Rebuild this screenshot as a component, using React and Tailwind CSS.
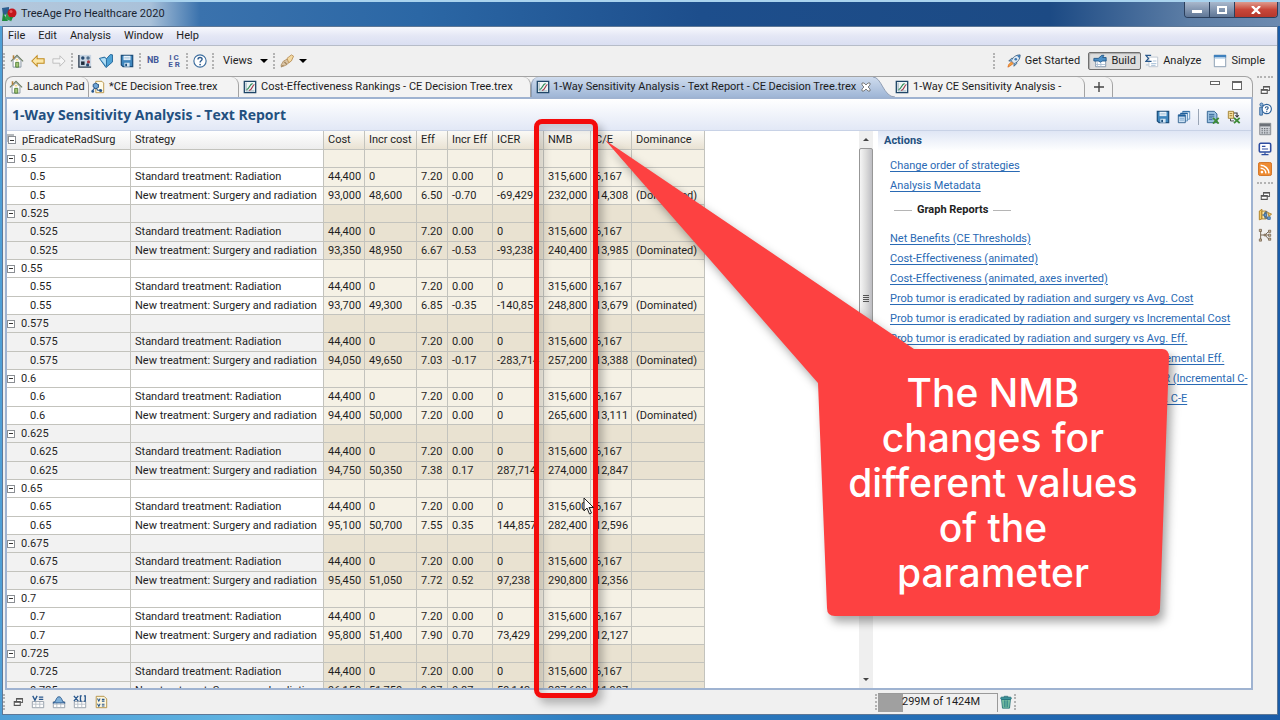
import clsx from 'clsx'

const GROUPS = [
  ['0.5', '93,000', '48,600', '6.50', '-0.70', '-69,429', '232,000', '14,308', '(Dominated)'],
  ['0.525', '93,350', '48,950', '6.67', '-0.53', '-93,238', '240,400', '13,985', '(Dominated)'],
  ['0.55', '93,700', '49,300', '6.85', '-0.35', '-140,857', '248,800', '13,679', '(Dominated)'],
  ['0.575', '94,050', '49,650', '7.03', '-0.17', '-283,714', '257,200', '13,388', '(Dominated)'],
  ['0.6', '94,400', '50,000', '7.20', '0.00', '0', '265,600', '13,111', '(Dominated)'],
  ['0.625', '94,750', '50,350', '7.38', '0.17', '287,714', '274,000', '12,847', ''],
  ['0.65', '95,100', '50,700', '7.55', '0.35', '144,857', '282,400', '12,596', ''],
  ['0.675', '95,450', '51,050', '7.72', '0.52', '97,238', '290,800', '12,356', ''],
  ['0.7', '95,800', '51,400', '7.90', '0.70', '73,429', '299,200', '12,127', ''],
  ['0.725', '96,150', '51,750', '8.07', '0.87', '59,143', '307,600', '11,907', ''],
]
const STANDARD = ['44,400', '0', '7.20', '0.00', '0', '315,600', '6,167', '']
const HEADERS = ['Cost', 'Incr cost', 'Eff', 'Incr Eff', 'ICER', 'NMB', 'C/E', 'Dominance']

const TUMOR = 'Prob tumor is eradicated by radiation and surgery vs '
const GRAPH_LINKS = [
  'Net Benefits (CE Thresholds)',
  'Cost-Effectiveness (animated)',
  'Cost-Effectiveness (animated, axes inverted)',
  TUMOR + 'Avg. Cost',
  TUMOR + 'Incremental Cost',
  TUMOR + 'Avg. Eff.',
  TUMOR + 'Incremental Eff.',
  TUMOR + 'ICER (Incremental C-',
  TUMOR + 'Avg. C-E',
]

/* ---------- icons ---------- */

function Icon({ size = 'size-[14px]', children }) {
  return <svg viewBox="0 0 16 16" className={clsx('shrink-0', size)} fill="none" aria-hidden="true">{children}</svg>
}

const Logo = () => (
  <Icon size="size-4">
    <path d="M1 2l7-1v7l-6 1z" fill="#2b5d8e" />
    <path d="M2 7l5 8H1z" fill="#1e8a3c" />
    <path d="M6 6l4 9-6-2z" fill="#2f9e48" />
    <circle cx="11" cy="7" r="4.500" fill="#c4161c" />
    <circle cx="10" cy="5.500" r="1.500" fill="#e8585c" />
    <path d="M8 11l4 0-2 4.500z" fill="#1e8a3c" />
  </Icon>
)

const House = () => (
  <Icon>
    <path d="M3.500 7.500v7.500h9v-7.500L8 3z" fill="#fff" stroke="#7b8a99" />
    <path d="M1 8.500L8 1.500l7 7" stroke="#6b7c62" strokeWidth="1.200" />
    <path d="M4 1.500v4" stroke="#b5803a" strokeWidth="1.800" />
    <path d="M6.500 9.500h3.500v5.500H6.500z" fill="#a8c878" stroke="#4c7a35" />
    <path d="M6.500 5.500h3v2h-3z" fill="#f6d98b" />
  </Icon>
)

const Arrow = ({ right }) => (
  <Icon>
    {right
      ? <path d="M15 8L9 2v3.500H1v5h8V14z" fill="#f6f6f6" stroke="#b9b9b9" />
      : <path d="M1 8l6-6v3.500h8v5H7V14z" fill="#fbe6a6" stroke="#c08a1e" strokeWidth="1.200" />}
  </Icon>
)

const Grid = () => (
  <Icon>
    <path d="M1 1h14v14H1z" fill="#c9d6e3" />
    <path d="M1 1v14h14" stroke="#2f3f52" strokeWidth="1.500" />
    <circle cx="5.500" cy="4.500" r="2" fill="#26496f" />
    <circle cx="11.500" cy="4.500" r="2" fill="#50708f" />
    <path d="M3.500 8.500h4v4h-4z" fill="#1f2c3c" />
    <circle cx="12" cy="9" r="1.800" fill="#a83a44" />
    <circle cx="11" cy="12.500" r="1.800" fill="#26496f" />
  </Icon>
)

const OpenBook = () => (
  <Icon>
    <path d="M.5 5l6-1.500 2 2L13 .5l2.500.5v8L8 15.500z" fill="#4fa3d6" stroke="#1c5f93" />
    <path d="M1.500 5.500l5-1 2 2V14z" fill="#b5dff5" />
    <path d="M8.500 6v8" stroke="#1c5f93" />
  </Icon>
)

const Floppy = () => (
  <Icon>
    <path d="M1.500 1.500h13v13h-11l-2-2z" fill="#3f86bd" stroke="#1d4f7c" strokeWidth="1.400" />
    <path d="M4 2h8v5H4z" fill="#e9f3fb" />
    <path d="M5 4h6M5 5.500h6" stroke="#a9c4da" strokeWidth=".8" />
    <path d="M5 10h6v4.500H5z" fill="#d3e5f3" />
    <path d="M6 11h2v3H6z" fill="#1d4f7c" />
  </Icon>
)

const Floppies = () => (
  <Icon>
    <path d="M6.500 1.500h8v9h-8z" fill="#e9f3fb" stroke="#5f8fbb" />
    <path d="M4 3.500h8v9H4z" fill="#cfe3f4" stroke="#5f8fbb" />
    <path d="M1.500 5.500h8v9h-8z" fill="#cde1f3" stroke="#2a5c8c" />
    <path d="M1.500 6.500h8" stroke="#1d5f9c" strokeWidth="2" />
    <path d="M4 4h8M6.500 2h8" stroke="#1d5f9c" strokeWidth="1.200" />
    <path d="M3 9.500h5M3 11.500h5" stroke="#7da7cd" />
  </Icon>
)

const HelpRing = () => (
  <Icon>
    <circle cx="8" cy="8" r="7" fill="#fff" stroke="#3c6d9e" strokeWidth="1.300" />
    <path d="M5.700 6.200c0-3 4.700-3 4.700-.2 0 1.800-2.300 1.700-2.300 3.600" stroke="#2c5c90" strokeWidth="1.600" />
    <circle cx="8.100" cy="12" r="1" fill="#2c5c90" />
  </Icon>
)

const Torch = () => (
  <Icon>
    <path d="M1 13l3-5 6-3 2 3-4 4-4 2z" fill="#d8c3a4" stroke="#b39468" />
    <path d="M8 5l5-4 2.500 1.500L13 8l-3 2z" fill="#f3d9a2" stroke="#b98f56" />
    <path d="M5 9l3 3M1 15l3-2" stroke="#9b7b50" strokeWidth="1.200" />
  </Icon>
)

const Rocket = () => (
  <Icon>
    <path d="M5 8c1-4 5-7 10-7 0 5-3 9-7 10z" fill="#dfe9f2" stroke="#41607e" />
    <path d="M11 1.500c1.500 0 3-.5 4-.5 0 1-.3 2.500-.7 4z" fill="#3c78b4" />
    <circle cx="10" cy="6" r="1.500" fill="#3c78b4" />
    <path d="M5 8L2 8l3-3 2 0M8 11v3l3-3v-2" fill="#7fb0d8" stroke="#41607e" />
    <path d="M5 9l2 2-4 3-2 1 1-3z" fill="#f3a33c" stroke="#d9641e" strokeWidth=".8" />
  </Icon>
)

const BuildIcon = () => (
  <Icon>
    <path d="M3 5.500h11.500v9H3z" fill="#fff" stroke="#7a8fa6" />
    <path d="M1 5h5l4-3.500h2.500L11 4h4v4h-4.500L9 9.500 6 8H1z" fill="#4b8fc6" stroke="#1f5688" />
    <path d="M5 9.500v5M9 10v4.500M3 12h11" stroke="#a9bed3" />
  </Icon>
)

const AnalyzeIcon = () => (
  <Icon>
    <path d="M4.500 3.500h10v11h-10z" fill="#fff" stroke="#b9c4cf" />
    <path d="M7 1.500H1l3 3.500-3 3.500h6.500" stroke="#28588c" strokeWidth="1.500" />
    <path d="M1 12.500h3M7 11h6M7 13h5M9 8h4" stroke="#9db8d2" />
  </Icon>
)

const WindowIcon = () => (
  <Icon>
    <path d="M1.500 1.500h13v13h-13z" fill="#fff" stroke="#7f95ab" />
    <path d="M1 1h14v3H1z" fill="#3f80bd" />
    <path d="M2 4h12v1.500H2z" fill="#bcd7ee" />
  </Icon>
)

const TreeFile = () => (
  <Icon>
    <path d="M5.500 1.500h7l2 2v11h-9z" fill="#fffbe9" stroke="#b58f3d" />
    <path d="M1 13l4-5 3 4 3-1M5 8l4-3" stroke="#27568c" strokeWidth="1.200" />
    <path d="M2.500 5l3-1.500 3 2v3l-3 1.500-3-2z" fill="#6fa6d6" stroke="#1f4c7e" />
    <circle cx="2" cy="13" r="1.500" fill="#27568c" />
    <circle cx="11" cy="12" r="1.800" fill="#27568c" />
  </Icon>
)

const ChartIcon = () => (
  <Icon>
    <path d="M1.500 1.500h13v13h-13z" fill="#eef5f6" stroke="#1f4668" strokeWidth="1.500" />
    <path d="M3.500 3v9.500H13" stroke="#8fa5b5" />
    <path d="M4 11c4-1 3-6 7-7" stroke="#2f8a55" strokeWidth="1.300" />
    <path d="M7 12c4-1 3-5 6-7" stroke="#a13a4c" strokeWidth="1.300" />
  </Icon>
)

const Restore = () => (
  <Icon size="size-3">
    <path d="M6 3.500h8v5H6z" fill="#fff" stroke="#666" strokeWidth="1.400" />
    <path d="M3 7.500h8v5H3z" fill="#fff" stroke="#555" strokeWidth="1.400" />
    <path d="M6 3.500h8M3 8h8" stroke="#555" strokeWidth="2" />
  </Icon>
)

const ExcelDoc = () => (
  <Icon>
    <path d="M1.500 1.500h8l3 3v10h-11z" fill="#9cc2e2" stroke="#2a5c8c" />
    <path d="M3.500 5h6M3.500 7h6M3.500 9h4M3.500 11h4" stroke="#2a5c8c" />
    <path d="M8 9l6.500 6.500M14.500 9L8 15.500" stroke="#3d8b37" strokeWidth="2.200" />
  </Icon>
)

const ExcelExport = () => (
  <Icon>
    <path d="M1.500 1.500h6v8h-6z" fill="#f6df9d" stroke="#9c7a2b" />
    <path d="M3 4h3M3 6.500h3" stroke="#9c7a2b" />
    <path d="M8 3.500h3.500V8M9.500 6l2 2 2-2" stroke="#333" strokeWidth="1.200" />
    <path d="M8 9l6.500 6M14.500 9L8 15" stroke="#3d8b37" strokeWidth="2.200" />
    <path d="M4 10v2.500h4" stroke="#333" />
  </Icon>
)

const HelpPerson = () => (
  <Icon>
    <circle cx="4" cy="3" r="1.800" fill="#8fb6dd" stroke="#2e629a" />
    <path d="M2 6h3v9H2z" fill="#8fb6dd" stroke="#2e629a" />
    <circle cx="10" cy="8" r="5.300" fill="#fff" stroke="#2e629a" strokeWidth="1.300" />
    <path d="M8.300 7c0-2 3.300-2 3.300-.2 0 1.200-1.600 1.200-1.600 2.500" stroke="#2c5c90" strokeWidth="1.300" />
    <circle cx="10" cy="11" r=".8" fill="#2c5c90" />
  </Icon>
)

const Calculator = () => (
  <Icon>
    <path d="M2 1.500h12.500v13H2z" fill="#cfd3d8" stroke="#7c8086" />
    <path d="M2 2h12v3H2z" fill="#6b7077" />
    <path d="M4 7.500h9M4 10h9M4 12.500h9" stroke="#666b72" strokeWidth="1.400" strokeDasharray="1.600 1.200" />
  </Icon>
)

const Monitor = () => (
  <Icon>
    <rect x="1.500" y="1.500" width="13" height="10" rx="1.500" fill="#fff" stroke="#2d4da0" strokeWidth="1.800" />
    <path d="M4.500 5h4M4.500 8h7M4 14.500h8M8 12v2" stroke="#2d4da0" strokeWidth="1.400" />
  </Icon>
)

const Rss = () => (
  <Icon>
    <rect x=".5" y=".5" width="15" height="15" rx="2" fill="#ee8b32" stroke="#cf6a17" />
    <circle cx="4.500" cy="11.500" r="1.500" fill="#fff" />
    <path d="M3 7.200a6 6 0 0 1 6 5.800M3 3.700A9.500 9.500 0 0 1 12.500 13" stroke="#fff" strokeWidth="1.700" />
  </Icon>
)

const FolderTree = () => (
  <Icon>
    <path d="M1.500 3.500l3-2v11l-3 1z" fill="#f3c865" stroke="#a87a1e" />
    <path d="M4.500 3.500h5v9h-5z" fill="#fbe6a6" stroke="#a87a1e" />
    <path d="M5 8h3M8 4.500v7h4M8 4.500h3" stroke="#27568c" strokeWidth="1.200" />
    <path d="M7 6.500h3v3H7zM11 10h3v3h-3z" fill="#6fa6d6" stroke="#27568c" strokeWidth=".8" />
    <path d="M11 5l4.500 2-3 2.500z" fill="#f3c865" stroke="#a87a1e" />
  </Icon>
)

const OutlineTree = () => (
  <Icon>
    <path d="M3 3v10M3 8h5M8 8l4-4M8 8h4M8 8l4 4.500" stroke="#6b5a45" />
    <path d="M1.500 1.500h2.500v2.500H1.500zM1.500 12.500h2.500V15H1.500zM7 7h2v2H7zM12 2.500h2.500V5H12zM12 7h2.500v2.500H12zM12 11.500h2.500V14H12z" fill="#c9b79c" stroke="#6b5a45" strokeWidth=".8" />
  </Icon>
)

const SheetIcon = ({ children }) => (
  <Icon>
    <path d="M1.500 7.500h13v7h-13z" fill="#fff" stroke="#8e98a3" />
    <path d="M1.500 10.500h13M5.500 8v6M10 8v6" stroke="#b5bdc6" />
    {children}
  </Icon>
)

const Trash = () => (
  <Icon>
    <path d="M3 5h10l-1 10H4z" fill="#8fd0a8" stroke="#1f6e77" />
    <path d="M6 6v8M8 6v8M10 6v8" stroke="#2a7f88" strokeWidth="1.200" />
    <rect x="2" y="2.500" width="12" height="2.500" rx="1" fill="#3f98a0" stroke="#1f6e77" />
    <path d="M6 2.500v-1h4v1" stroke="#1f6e77" />
  </Icon>
)

/* ---------- small parts ---------- */

function Handle({ horizontal }) {
  return horizontal
    ? <span className="w-4 border-t-2 border-dotted border-[#b3b3b3]" />
    : <span className="h-4 w-0 shrink-0 border-l-2 border-dotted border-[#b3b3b3]" />
}

function Caret() {
  return <span className="size-0 border-x-4 border-t-4 border-x-transparent border-t-black" />
}

function ToolButton({ label, className, children }) {
  return (
    <button type="button" aria-label={label} className={clsx('flex shrink-0 items-center justify-center', className)}>
      {children}
    </button>
  )
}

function ToolGroup({ children }) {
  return <div className="flex items-center gap-[7px]">{children}</div>
}

function Toggle({ double }) {
  return (
    <span className={clsx('relative flex size-2 shrink-0 items-center justify-center border border-[#8b8f94] bg-white', double && 'shadow-[-2px_-2px_0_#b4b8bc]')}>
      <span className="h-px w-1 bg-[#333]" />
    </span>
  )
}

/* ---------- window chrome ---------- */

function TitleBar() {
  return (
    <header className="flex h-[26px] shrink-0 items-start border-t-2 border-[#a9d3ee] bg-[linear-gradient(90deg,#b4c8dc_0px,#a9c1d9_150px,#3a72ad_200px,#2b67a5_420px,#1d4e8c_700px,#1c4a84_1050px,#5d7ea6_1190px,#6c8ab0_1280px)]">
      <div className="flex h-6 grow items-center gap-1 pl-px">
        <Logo />
        <h1 className="text-[#1a2430]">TreeAge Pro Healthcare 2020</h1>
      </div>
      <div className="mr-[2px] flex h-4 overflow-hidden rounded-b border border-t-0 border-[#2b3f5c]">
        <button type="button" aria-label="Minimize" className="flex w-[25px] items-end justify-center border-r border-[#2b3f5c] bg-linear-to-b from-[#a9b8cc] to-[#5f7696] pb-1">
          <span className="h-[3px] w-[10px] bg-white" />
        </button>
        <button type="button" aria-label="Maximize" className="flex w-[25px] items-center justify-center border-r border-[#2b3f5c] bg-linear-to-b from-[#a9b8cc] to-[#5f7696]">
          <span className="h-2 w-[10px] border-2 border-white" />
        </button>
        <button type="button" aria-label="Close" className="flex w-[42px] items-center justify-center bg-linear-to-b from-[#dd9a8e] via-[#c9473a] to-[#b5382c]">
          <svg viewBox="0 0 10 8" className="h-2 w-[10px]" aria-hidden="true"><path d="M1 0l8 8M9 0L1 8" stroke="#fff" strokeWidth="2.400" /></svg>
        </button>
      </div>
    </header>
  )
}

function MenuBar() {
  return (
    <nav className="flex h-[19px] shrink-0 items-center gap-[13px] border-b border-[#b6bcc8] bg-linear-to-b from-[#f7f8fd] via-[#e4e7f5] to-[#dadff2] pl-[5px]">
      {['File', 'Edit', 'Analysis', 'Window', 'Help'].map(m => <button key={m} type="button">{m}</button>)}
    </nav>
  )
}

function Toolbar() {
  return (
    <div className="flex h-[30px] shrink-0 items-center justify-between bg-[#f0f0f0] pr-3">
      <div className="flex items-center gap-[5px]">
        <Handle />
        <ToolGroup>
          <ToolButton label="Home"><House /></ToolButton>
          <ToolButton label="Back"><Arrow /></ToolButton>
          <ToolButton label="Forward"><Arrow right /></ToolButton>
        </ToolGroup>
        <Handle />
        <ToolGroup>
          <ToolButton label="New model"><Grid /></ToolButton>
          <ToolButton label="Open"><OpenBook /></ToolButton>
          <ToolButton label="Save"><Floppy /></ToolButton>
        </ToolGroup>
        <Handle />
        <ToolGroup>
          <ToolButton className="w-[14px] text-[9px] font-bold text-[#44589a]">NB</ToolButton>
          <ToolButton className="w-[14px] flex-col text-[8px] leading-[7px] font-bold text-[#44589a]"><span>I C</span><span>E R</span></ToolButton>
        </ToolGroup>
        <Handle />
        <ToolButton label="Help"><HelpRing /></ToolButton>
        <Handle />
        <ToolButton className="gap-2 pl-1"><span>Views</span><Caret /></ToolButton>
        <Handle />
        <ToolButton label="Search" className="gap-[5px]"><Torch /><Caret /></ToolButton>
      </div>
      <div className="flex items-center gap-1">
        <Handle />
        <ToolButton className="mr-1 ml-2 gap-1"><Rocket />Get Started</ToolButton>
        <ToolButton className="h-[18px] w-[53px] gap-1 rounded-xs border border-[#6f6f6f] bg-[#dedede] shadow-[inset_1px_1px_1px_#aaa]"><BuildIcon />Build</ToolButton>
        <ToolButton className="mr-2 gap-1"><AnalyzeIcon />Analyze</ToolButton>
        <ToolButton className="gap-1"><WindowIcon />Simple</ToolButton>
      </div>
    </div>
  )
}

function Tab({ icon, className, children }) {
  return (
    <button type="button" role="tab" aria-selected="false" className={clsx('flex shrink-0 items-center gap-1 overflow-hidden rounded-tr-lg border-r border-[#a3a3a3] whitespace-nowrap', className)}>
      {icon}{children}
    </button>
  )
}

function TabBar() {
  return (
    <div role="tablist" className="flex h-[21px] shrink-0 overflow-hidden rounded-t-lg border border-b-0 border-[#a3a3a3] bg-[#f3f3f3] text-[#1c1c1c]">
      <Tab icon={<House />} className="w-[83px] pl-[3px]">Launch Pad</Tab>
      <Tab icon={<TreeFile />} className="w-[150px] pl-[2px]">*CE Decision Tree.trex</Tab>
      <Tab icon={<ChartIcon />} className="w-[292px] pl-1">Cost-Effectiveness Rankings - CE Decision Tree.trex</Tab>
      <button type="button" role="tab" aria-selected="true" className="flex w-[342px] shrink-0 items-center gap-[3px] rounded-tl-lg border-l border-[#8b9cb5] bg-linear-to-b from-[#cfdcee] to-[#9fb6d6] pl-1 whitespace-nowrap">
        <ChartIcon />
        <span>1-Way Sensitivity Analysis - Text Report - CE Decision Tree.trex</span>
        <svg viewBox="0 0 10 10" className="ml-[2px] size-[10px] shrink-0" aria-hidden="true">
          <path d="M1 1h2l2 2 2-2h2v2L7 5l2 2v2H7L5 7 3 9H1V7l2-2-2-2z" fill="#fff" stroke="#666" strokeWidth=".8" />
        </svg>
      </button>
      <svg viewBox="0 0 30 21" preserveAspectRatio="none" className="h-full w-[22px] shrink-0" aria-hidden="true">
        <defs>
          <linearGradient id="tab" x1="0" y1="0" x2="0" y2="1"><stop stopColor="#cfdcee" /><stop offset="1" stopColor="#9fb6d6" /></linearGradient>
        </defs>
        <path d="M0 0c12 0 14 21 30 21H0z" fill="url(#tab)" />
        <path d="M0 0c12 0 14 21 30 21" fill="none" stroke="#8393aa" />
      </svg>
      <Tab icon={<ChartIcon />} className="w-[190px]">1-Way CE Sensitivity Analysis -</Tab>
      <Tab className="w-[28px] justify-center">
        <svg viewBox="0 0 12 12" className="size-3" aria-hidden="true"><path d="M6 1v10M1 6h10" stroke="#444" strokeWidth="1.400" /></svg>
      </Tab>
      <div className="flex grow items-start justify-end gap-3 pt-1 pr-[10px]">
        <button type="button" aria-label="Minimize editor" className="h-1 w-[10px] border border-[#666] bg-white" />
        <button type="button" aria-label="Maximize editor" className="h-[9px] w-[10px] border border-t-2 border-[#666] bg-white" />
      </div>
    </div>
  )
}

/* ---------- report ---------- */

function ReportHeader() {
  return (
    <div className="flex h-8 shrink-0 items-center justify-between border-b border-[#c8d2e6] bg-linear-to-b from-white to-[#e2e8f6] pr-[10px] pl-[5px]">
      <h2 className="font-['Open_Sans'] text-[14px] font-bold text-[#23507f]">1-Way Sensitivity Analysis - Text Report</h2>
      <div className="flex items-center gap-[7px] pt-1">
        <ToolButton label="Save"><Floppy /></ToolButton>
        <ToolButton label="Save all"><Floppies /></ToolButton>
        <span className="h-4 w-px bg-[#9aa5b5]" />
        <ToolButton label="Export to Excel"><ExcelDoc /></ToolButton>
        <ToolButton label="Export tree to Excel"><ExcelExport /></ToolButton>
      </div>
    </div>
  )
}

const CELL = 'overflow-hidden border-r border-b border-[#c3c3bd] p-0 text-left font-normal whitespace-nowrap'

function Row({ label, strategy, values, odd, height, group }) {
  return (
    <tr className={clsx(height, odd ? 'bg-[#f2f2f2]' : 'bg-white')}>
      <td className={CELL}>
        {group
          ? <span className="flex items-center gap-[6px]"><Toggle />{label}</span>
          : <span className="pl-[23px]">{label}</span>}
      </td>
      <td className={clsx(CELL, 'pl-1')}>{strategy}</td>
      {values.map((v, i) => (
        <td key={i} className={clsx(CELL, 'pl-1', odd ? 'bg-[#e9e2d1]' : 'bg-[#f5f1e5]')}>{v}</td>
      ))}
    </tr>
  )
}

const BLANK = ['', '', '', '', '', '', '', '']

function ReportTable() {
  return (
    <table className="w-[698px] table-fixed border-separate border-spacing-0 leading-4">
      <colgroup>
        <col className="w-[124px]" />
        <col className="w-[193px]" />
        <col className="w-[41px]" />
        <col className="w-[52px]" />
        <col className="w-[31px]" />
        <col className="w-[45px]" />
        <col className="w-[51px]" />
        <col className="w-[47px]" />
        <col className="w-[41px]" />
        <col className="w-[73px]" />
      </colgroup>
      <thead>
        <tr className="h-[19px] bg-linear-to-b from-white to-[#ececec]">
          <th className={CELL}><span className="flex items-center gap-[6px] pl-px"><Toggle double />pEradicateRadSurg</span></th>
          <th className={clsx(CELL, 'pl-1')}>Strategy</th>
          {HEADERS.map(h => (
            <th key={h} className={clsx(CELL, 'bg-linear-to-b from-[#fbfaf6] to-[#e9e2d3] pl-1')}>{h}</th>
          ))}
        </tr>
      </thead>
      {GROUPS.map(([p, ...values], i) => (
        <tbody key={p}>
          <Row group label={p} values={BLANK} odd={i % 2 === 1} height="h-[18px]" />
          <Row label={p} strategy="Standard treatment: Radiation" values={STANDARD} odd={i % 2 === 1} height="h-[19px]" />
          <Row label={p} strategy="New treatment: Surgery and radiation" values={values} odd={i % 2 === 1} height="h-[18px]" />
        </tbody>
      ))}
    </table>
  )
}

function ScrollBar() {
  return (
    <div className="flex w-[14px] shrink-0 flex-col items-center bg-[#efefef]">
      <span className="flex h-[17px] items-center"><span className="size-0 border-x-[3px] border-b-[3px] border-x-transparent border-b-[#444]" /></span>
      <div className="flex h-[300px] w-full flex-col items-center justify-center gap-px rounded-xs border border-[#979797] bg-linear-to-r from-[#f5f5f5] via-[#dcdcdc] to-[#bdbdc2]">
        <span className="h-px w-[6px] bg-[#555]" />
        <span className="h-px w-[6px] bg-[#555]" />
        <span className="h-px w-[6px] bg-[#555]" />
        <span className="h-px w-[6px] bg-[#555]" />
      </div>
      <span className="mt-auto flex h-[17px] items-center"><span className="size-0 border-x-[3px] border-t-[3px] border-x-transparent border-t-[#444]" /></span>
    </div>
  )
}

function ActionLink({ children }) {
  return <li className="h-5"><a href="#report" className="text-[#2a6ab4] underline underline-offset-2">{children}</a></li>
}

function Actions() {
  return (
    <aside className="ml-[5px] w-[373px] shrink-0 overflow-hidden bg-linear-to-b from-[#dfe6f5] to-white to-[20px] whitespace-nowrap">
      <h3 className="h-[25px] pl-[6px] leading-5 font-bold text-[#23507f]">Actions</h3>
      <ul className="pl-3 leading-5">
        <ActionLink>Change order of strategies</ActionLink>
        <ActionLink>Analysis Metadata</ActionLink>
      </ul>
      <h4 className="my-1 flex h-5 items-center gap-[5px] pl-4 font-bold">
        <span className="h-px w-[18px] bg-[#b5b5b5]" />Graph Reports<span className="h-px w-[18px] bg-[#b5b5b5]" />
      </h4>
      <ul className="pt-[5px] pl-3 leading-5">
        {GRAPH_LINKS.map(l => <ActionLink key={l}>{l}</ActionLink>)}
      </ul>
    </aside>
  )
}

function SideTrim() {
  return (
    <div className="flex w-6 shrink-0 flex-col items-center gap-[6px]">
      <Handle horizontal />
      <ToolButton label="Restore help"><Restore /></ToolButton>
      <ToolButton label="Help"><HelpPerson /></ToolButton>
      <ToolButton label="Calculator"><Calculator /></ToolButton>
      <ToolButton label="Console"><Monitor /></ToolButton>
      <ToolButton label="News"><Rss /></ToolButton>
      <Handle horizontal />
      <ToolButton label="Restore outline"><Restore /></ToolButton>
      <ToolButton label="Projects"><FolderTree /></ToolButton>
      <ToolButton label="Outline"><OutlineTree /></ToolButton>
    </div>
  )
}

function StatusBar() {
  return (
    <footer className="flex h-6 shrink-0 items-center gap-[7px]">
      <Handle />
      <ToolButton label="Restore"><Restore /></ToolButton>
      <ToolButton label="Variables"><SheetIcon><path d="M2 1l2.500 5L7 1M9 2.500h5M9 5h5" stroke="#27568c" strokeWidth="1.500" /></SheetIcon></ToolButton>
      <ToolButton label="Distributions"><SheetIcon><path d="M1 9c4 0 3-7 7-7s3 7 7 7z" fill="#7fb0d8" stroke="#27568c" /></SheetIcon></ToolButton>
      <ToolButton label="Tables"><SheetIcon><path d="M1 1l5 6M6 1L1 7M10 1H8.500v6H10M12.500 1H14v6h-1.500" stroke="#27568c" strokeWidth="1.500" /></SheetIcon></ToolButton>
      <ToolButton label="Value report">
        <Icon>
          <path d="M2.500 1.500h9l3 3v10h-12z" fill="#fdf7df" stroke="#b08c3c" />
          <path d="M4 4l1.500 3L7 4M4 10l1.500 3L7 10M9 5h3M9 7h3M9 10.500h3M9 12.500h3" stroke="#27568c" strokeWidth="1.200" />
        </Icon>
      </ToolButton>
      <div className="ml-auto flex w-[402px] items-center gap-px">
        <Handle />
        <div className="flex h-[19px] w-[120px] items-center border-t border-r border-[#9a9a9a] bg-[linear-gradient(90deg,#a0a0a0_25px,#f0f0f0_25px)] pl-6">299M of 1424M</div>
        <ToolButton label="Run garbage collector"><Trash /></ToolButton>
        <Handle />
      </div>
    </footer>
  )
}

/* ---------- annotations ---------- */

function Annotations() {
  return (
    <div className="pointer-events-none absolute inset-0">
      <div className="absolute top-[119px] left-[534px] h-[579px] w-16 rounded-lg border-[5px] border-[#f40b0b] shadow-[5px_6px_8px_rgba(0,0,0,0.25),inset_5px_6px_8px_rgba(0,0,0,0.15)]" />
      <svg viewBox="0 0 24 36" className="absolute top-[497px] left-[583px] h-[18px] w-3" aria-hidden="true">
        <path d="M2 2v26l6-6 5 12 4-2-5-11h9z" fill="#fff" stroke="#222" strokeWidth="2" />
      </svg>
      <svg viewBox="600 136 576 490" className="absolute top-[136px] left-[600px] h-[490px] w-[576px] overflow-visible drop-shadow-[4px_6px_5px_rgba(0,0,0,0.35)]" aria-hidden="true">
        <path d="M605 140L914 349H1162Q1169 349 1169 357L1160 608Q1160 616 1152 616H835Q827 616 827 608L818 383Z" fill="#fd4141" />
      </svg>
      <p className="absolute top-[370px] left-[830px] w-[326px] text-center font-['Inter'] text-[39px] leading-[45px] font-medium text-white">
        The NMB<br />changes for<br />different values<br />of the<br />parameter
      </p>
    </div>
  )
}

export default function App() {
  return (
    <div className="relative flex h-screen flex-col overflow-hidden bg-[linear-gradient(90deg,#4f9fd6,#5fb4e2_20%,#2f7fc2_45%,#1a5ca8)] font-['Roboto',sans-serif] text-[11px] text-[#1e1e1e]">
      <TitleBar />
      <main className="mx-[2px] mb-[5px] flex min-h-0 grow flex-col border border-[#5d7796] bg-[#f0f0f0]">
        <MenuBar />
        <Toolbar />
        <div className="flex min-h-0 grow">
          <section className="flex min-w-0 grow flex-col pl-[2px]">
            <TabBar />
            <div className="flex min-h-0 grow flex-col border-2 border-[#9fb3d1] bg-white">
              <ReportHeader />
              <div className="flex min-h-0 grow">
                <div className="min-w-0 grow overflow-hidden"><ReportTable /></div>
                <ScrollBar />
                <Actions />
              </div>
            </div>
          </section>
          <SideTrim />
        </div>
        <StatusBar />
      </main>
      <Annotations />
    </div>
  )
}
